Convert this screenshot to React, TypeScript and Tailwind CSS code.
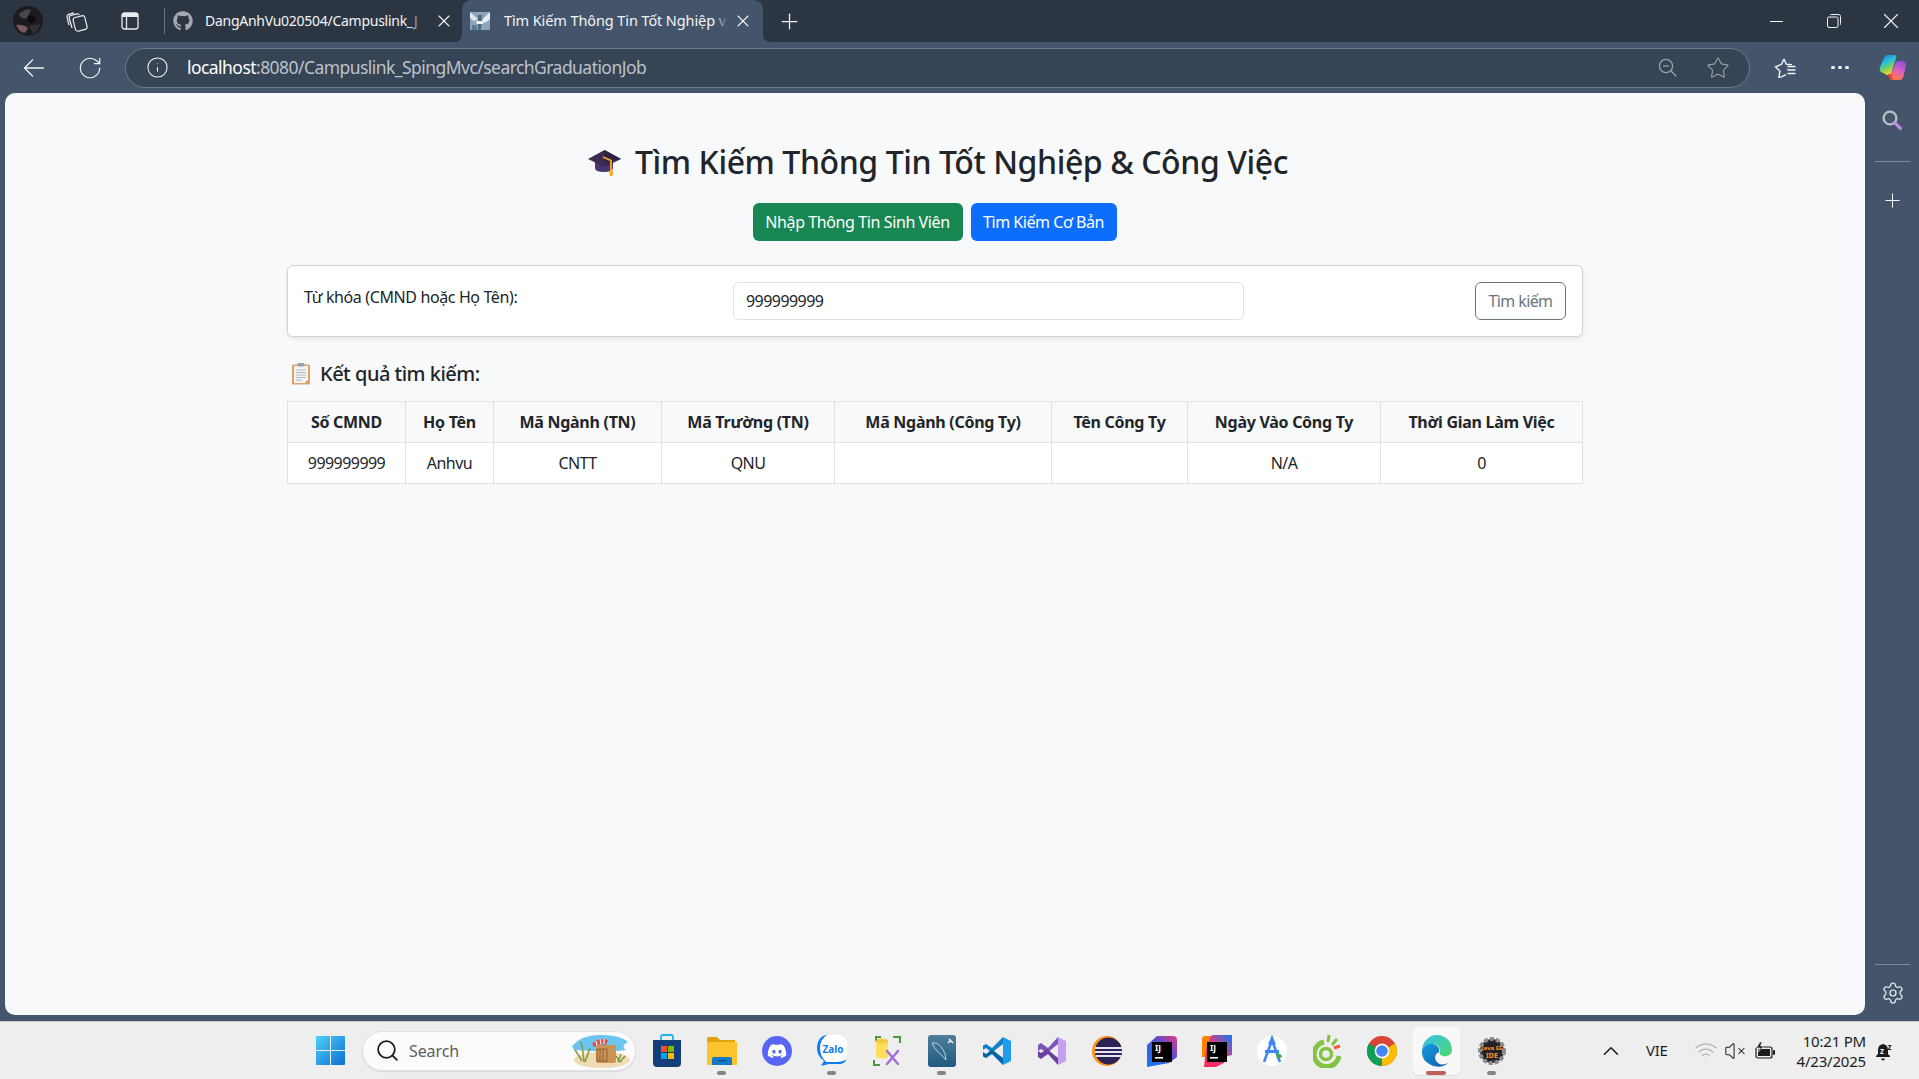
import React from "react";
import { RotateCw, Info, Star, Search, Plus, X, Settings, Wifi, VolumeX, ChevronUp } from "lucide-react";
import { FaGithub, FaDiscord } from "react-icons/fa";

const cols = [
  { h: "Số CMND", v: "999999999", w: "w-[118px]" },
  { h: "Họ Tên", v: "Anhvu", w: "w-[88px]" },
  { h: "Mã Ngành (TN)", v: "CNTT", w: "w-[168px]" },
  { h: "Mã Trường (TN)", v: "QNU", w: "w-[173px]" },
  { h: "Mã Ngành (Công Ty)", v: "", w: "w-[217px]" },
  { h: "Tên Công Ty", v: "", w: "w-[136px]" },
  { h: "Ngày Vào Công Ty", v: "N/A", w: "w-[193px]" },
  { h: "Thời Gian Làm Việc", v: "0", w: "w-[202px]" },
];

function Avatar() {
  return (
    <svg width="30" height="30" viewBox="0 0 30 30">
      <circle cx="15" cy="15" r="15" fill="#1d1a20" />
      <path d="M6 8 Q12 2 18 4 L14 12 Q8 14 6 8Z" fill="#4a4650" />
      <path d="M15 10 Q21 8 23 13 Q22 18 17 17 Q14 15 15 10Z" fill="#0c0c10" />
      <path d="M3 19 Q10 18 15 22 L12 27 Q6 26 3 19Z" fill="#7a5a5e" />
      <path d="M16 20 L27 18 Q26 25 20 28Z" fill="#33303a" />
    </svg>
  );
}

function BackArrow() {
  return (
    <svg width="22" height="20" viewBox="0 0 22 20" fill="none" stroke="#f2f4f7" strokeWidth="1.3" strokeLinecap="round" strokeLinejoin="round">
      <path d="M1.5 10 H20.5 M9.5 2 L1.5 10 L9.5 18" />
    </svg>
  );
}

function Workspaces() {
  return (
    <svg width="22" height="22" viewBox="0 0 22 22" fill="none" stroke="#e8ecf0" strokeWidth="1.2">
      <rect x="8" y="6.5" width="12" height="14" rx="2.5" transform="rotate(-14 14 13)" />
      <path d="M6 18 L3.2 8 Q2.8 6 5 5.4 L11 3.8 Q12.6 3.6 13.4 5" />
      <path d="M3 15 L1 7 Q0.8 5 2.6 4.4 L8 2.8" />
    </svg>
  );
}

function VerticalTabs() {
  return (
    <svg width="18" height="18" viewBox="0 0 18 18" fill="none">
      <rect x="1" y="1" width="16" height="16" rx="2.5" stroke="#e8ecf0" strokeWidth="1.3" />
      <path d="M1 3.5 A2.5 2.5 0 0 1 3.5 1 H14.5 A2.5 2.5 0 0 1 17 3.5 V5 H1Z" fill="#e8ecf0" />
      <path d="M5.5 5 V17" stroke="#e8ecf0" strokeWidth="1.3" />
    </svg>
  );
}

function PageFavicon() {
  return (
    <svg width="20" height="20" viewBox="0 0 20 20">
      <rect x="0" y="1" width="20" height="18" fill="#8ba6b8" />
      <path d="M0 1 L8 8 L4 10 L0 7Z" fill="#dfe7ec" />
      <path d="M20 1 L12 9 L15 12 L20 8Z" fill="#e8eef2" />
      <path d="M8 4 L12 4 L11 19 L8 19Z" fill="#4d6a7e" />
      <path d="M6 10 L14 10 L13 13 L7 13Z" fill="#f1f4f6" />
      <rect x="2" y="14" width="5" height="5" fill="#5c7c91" />
    </svg>
  );
}

function Favs() {
  return (
    <svg width="22" height="22" viewBox="0 0 22 22" fill="none" stroke="#f2f4f7" strokeWidth="1.4" strokeLinejoin="round">
      <path d="M10 2 L12.3 7.2 L18 7.6 M13.6 11.7 L14 12 M8 19.6 L4.8 20.4 L6 14.2 L1.4 9.8 L7.4 7.4 L10 2" />
      <path d="M8 19.6 L12 17.6" />
      <path d="M14 9.5 H21 M14 13 H21 M14 16.5 H21" strokeLinecap="round" />
    </svg>
  );
}

function Copilot() {
  return (
    <svg width="28" height="28" viewBox="0 0 28 28">
      <defs>
        <linearGradient id="cpA" x1="0" y1="0" x2="0.4" y2="1">
          <stop offset="0" stopColor="#1673e6" />
          <stop offset="0.45" stopColor="#2ac3d8" />
          <stop offset="0.75" stopColor="#8bd24f" />
          <stop offset="1" stopColor="#f4d63a" />
        </linearGradient>
        <linearGradient id="cpB" x1="0.6" y1="0" x2="0.3" y2="1">
          <stop offset="0" stopColor="#8f4fd8" />
          <stop offset="0.5" stopColor="#e060c0" />
          <stop offset="1" stopColor="#ff7a3a" />
        </linearGradient>
      </defs>
      <path d="M9 1 H16 Q18 1 17 4 L12 20 Q11 22 8 21 L2 18 Q0 17 1 13 L5 4 Q6 1 9 1Z" fill="url(#cpA)" />
      <path d="M19 7 H24 Q28 8 27 12 L24 24 Q23 26 21 26 H13 Q10 26 11 23 L16 10 Q17 7 19 7Z" fill="url(#cpB)" />
      <path d="M9 20 L12 20 L14 26 Q11 26 10 24Z" fill="#e8432e" />
    </svg>
  );
}

function SideSearch() {
  return (
    <svg width="22" height="22" viewBox="0 0 22 22" fill="none">
      <circle cx="9" cy="9" r="6.4" stroke="#b9bdc4" strokeWidth="2.4" />
      <path d="M14.4 14.4 L19.4 19.4" stroke="#b98ae0" strokeWidth="3.4" strokeLinecap="round" />
    </svg>
  );
}

function Restore() {
  return (
    <svg width="14" height="14" viewBox="0 0 14 14" fill="none" stroke="#f2f4f7" strokeWidth="1">
      <rect x="0.5" y="3" width="10.5" height="10.5" rx="1.5" />
      <path d="M3 1 Q3.4 0.5 4.4 0.5 H11.5 Q13.5 0.5 13.5 2.5 V9.6 Q13.5 10.6 13 11" />
    </svg>
  );
}

function WinLogo() {
  return (
    <svg width="29" height="29" viewBox="0 0 29 29">
      <defs>
        <linearGradient id="winG" x1="0" y1="0" x2="1" y2="1">
          <stop offset="0" stopColor="#4fd0fb" />
          <stop offset="1" stopColor="#0a6fd1" />
        </linearGradient>
      </defs>
      <path d="M1 0 H14 V14 H0 V1 Q0 0 1 0Z M15 0 H28 Q29 0 29 1 V14 H15Z M0 15 H14 V29 H1 Q0 29 0 28Z M15 15 H29 V28 Q29 29 28 29 H15Z" fill="url(#winG)" />
    </svg>
  );
}

function Beach() {
  return (
    <svg width="62" height="34" viewBox="0 0 62 34">
      <path d="M4 12 Q14 0 34 1 Q52 1 60 8 Q52 12 58 16 L40 18 L6 16Z" fill="#6cc5ee" />
      <ellipse cx="34" cy="26" rx="28" ry="8" fill="#f0dcb4" />
      <path d="M16 28 Q15 16 13 8 M14 27 Q10 20 7 16 M17 28 Q20 20 22 14" stroke="#8a9a3c" strokeWidth="1.6" fill="none" />
      <rect x="28" y="11" width="20" height="18" rx="2" fill="#c99458" />
      <path d="M29 15 H39 V27 H29Z M32 15 V27 M35 15 V27" stroke="#8a5c2c" strokeWidth="0.9" fill="none" />
      <path d="M24 10 Q30 3 40 6 L38 11 Q30 9 26 13Z" fill="#d8544a" />
      <path d="M28 7 L29 11 M32 5 L33 10 M36 5 L36 10" stroke="#fff" strokeWidth="1.1" />
      <path d="M50 28 L53 20 M52 28 L57 22 M52 28 L48 22" stroke="#6f9138" strokeWidth="1.3" />
    </svg>
  );
}

function Store() {
  return (
    <svg width="30" height="34" viewBox="0 0 30 34">
      <path d="M9 7 V3 Q9 1 11 1 H19 Q21 1 21 3 V7" fill="none" stroke="#1fb6f0" strokeWidth="1.8" />
      <path d="M1 6 H29 V29 Q29 33 25 33 H5 Q1 33 1 29Z" fill="#123f7a" />
      <rect x="9" y="12" width="6" height="6" fill="#f25022" />
      <rect x="16" y="12" width="6" height="6" fill="#7fba00" />
      <rect x="9" y="19" width="6" height="6" fill="#00a4ef" />
      <rect x="16" y="19" width="6" height="6" fill="#ffb900" />
    </svg>
  );
}

function Folder() {
  return (
    <svg width="30" height="28" viewBox="0 0 30 28">
      <path d="M0 2 Q0 0 2 0 H10 L13 3 H28 V10 H0Z" fill="#e0a30c" />
      <rect x="0" y="5" width="30" height="23" fill="#fbc42d" />
      <path d="M5 22 Q5 20 7 20 H23 Q25 20 25 22 V28 H5Z" fill="#1479c9" />
      <rect x="11" y="23" width="8" height="1.3" fill="#0b4c86" />
    </svg>
  );
}

function Zalo() {
  return (
    <svg width="30" height="32" viewBox="0 0 30 32">
      <path d="M9 0 H22 Q30 1 30 9 V21 Q30 29 22 29 H12 L4 31 L7 26 Q0 21 0 13 Q0 2 9 0Z" fill="#ffffff" />
      <path d="M9 0 Q0 2 0 13 Q0 21 7 26 L4 31 L12 29 H22 Q28 29 29.5 24 Q26 27 20 27 H9 Q3 21 3 13 Q3 4 10 0Z" fill="#0a7cf5" />
      <text x="16" y="18" textAnchor="middle" fontSize="10" fontWeight="700" fill="#0a7cf5" fontFamily="Noto Sans, sans-serif">Zalo</text>
    </svg>
  );
}

function DbTool() {
  return (
    <svg width="28" height="30" viewBox="0 0 28 30" fill="none">
      <path d="M3 5 V1 H8 M20 1 H27 V7 M1 24 V29 H7" stroke="#4c9a3f" strokeWidth="2" />
      <path d="M3 5 Q9 2 15 5 V21 Q9 24 3 21Z" fill="#fbdf5c" />
      <ellipse cx="9" cy="5" rx="6" ry="2.5" fill="#f5c93a" />
      <path d="M14 15 L25 28 M25 15 L14 28" stroke="#a06cd5" strokeWidth="2.4" strokeLinecap="round" />
    </svg>
  );
}

function MysqlIcon() {
  return (
    <svg width="28" height="32" viewBox="0 0 28 32">
      <defs>
        <linearGradient id="myG" x1="0" y1="0" x2="0" y2="1">
          <stop offset="0" stopColor="#4e7f9c" />
          <stop offset="1" stopColor="#1f5a7f" />
        </linearGradient>
      </defs>
      <rect x="0" y="0" width="28" height="32" rx="3" fill="url(#myG)" />
      <path d="M4 8 Q10 7 14 13 Q18 18 18 25 Q14 20 10 17 Q6 13 4 8Z" fill="none" stroke="#c9d8e0" strokeWidth="0.9" />
      <path d="M21 4 L25 8 M23 5 L20 8" stroke="#eef3f6" strokeWidth="1.6" />
    </svg>
  );
}

function VsCode() {
  return (
    <svg width="30" height="30" viewBox="0 0 30 30">
      <path d="M21 1 L29 5 V25 L21 29Z" fill="#1f9cf0" />
      <path d="M21 1 V8 L10 16.5 L4 12 L1 14 V9.5 L4 8 L10 12Z" fill="#0f80c9" />
      <path d="M21 29 V22 L10 13.5 L4 18 L1 16 V20.5 L4 22 L10 18Z" fill="#0065a9" />
    </svg>
  );
}

function VsIcon() {
  return (
    <svg width="30" height="30" viewBox="0 0 30 30">
      <path d="M21 1 L29 5 V25 L21 29Z" fill="#c79ff0" />
      <path d="M21 1 V8 L10 17 L4 13 L1 15 V9 L4 7 L11 12Z" fill="#7d55b8" />
      <path d="M21 29 V22 L10 13 L4 17 L1 15 V21 L4 23 L11 18Z" fill="#68409f" />
    </svg>
  );
}

function Eclipse() {
  return (
    <svg width="30" height="30" viewBox="0 0 30 30">
      <circle cx="15" cy="15" r="15" fill="#f7941e" />
      <circle cx="16.5" cy="15" r="13.5" fill="#2c2255" />
      <path d="M3 11 H30 V13 H3Z M3 15 H30 V17 H3Z M4 19 H29 V21 H4Z" fill="#e8e4f2" />
    </svg>
  );
}

function Idea({ variant }: { variant: number }) {
  return (
    <svg width="30" height="32" viewBox="0 0 30 32">
      <defs>
        <linearGradient id={"ij" + variant} x1="0" y1="1" x2="1" y2="0">
          {variant === 1 ? <stop offset="0" stopColor="#087cfa" /> : <stop offset="0" stopColor="#fe2857" />}
          {variant === 1 ? <stop offset="0.6" stopColor="#5a4cd0" /> : <stop offset="0.5" stopColor="#e8367c" />}
          {variant === 1 ? <stop offset="1" stopColor="#e33a7d" /> : <stop offset="1" stopColor="#087cfa" />}
        </linearGradient>
      </defs>
      {variant === 2 && <path d="M0 4 Q0 1 3 1 H12 V22 H0Z" fill="#ff8100" />}
      <path d={variant === 1 ? "M0 10 L10 1 H26 Q30 1 30 5 V22 L22 28 L0 32Z" : "M8 4 Q8 0 12 0 H30 V20 L22 22 V28 L14 32 H2 L4 14Z"} fill={"url(#ij" + variant + ")"} />
      <rect x="5" y="7" width="20" height="20" fill="#000" />
      <text x="8" y="16" fontSize="8.5" fontWeight="700" fill="#fff" fontFamily="Noto Sans, sans-serif">IJ</text>
      <rect x="8" y="22" width="8" height="1.6" fill="#fff" />
    </svg>
  );
}

function AndroidStudio() {
  return (
    <svg width="30" height="32" viewBox="0 0 30 32">
      <circle cx="15" cy="16" r="15" fill="#fff" />
      <path d="M15 3 L17 8 L13 8Z M14 8 L7 27 M16 8 L23 27" stroke="#4285f4" strokeWidth="2.6" fill="#4285f4" />
      <rect x="8" y="15" width="14" height="3" fill="#4285f4" />
      <path d="M19 18 Q24 18 25 22 L20 24Z" fill="#34a853" />
    </svg>
  );
}

function CocCoc() {
  return (
    <svg width="28" height="34" viewBox="0 0 28 34" fill="none">
      <path d="M11 8 A12.5 12.5 0 1 0 26 22" stroke="#82c341" strokeWidth="5" />
      <circle cx="13" cy="20" r="5.5" stroke="#82c341" strokeWidth="3.5" />
      <path d="M15 8 L16 1 M19 11 L24 5" stroke="#82c341" strokeWidth="3" />
      <path d="M21 14 L27 12" stroke="#f15a29" strokeWidth="3" />
    </svg>
  );
}

function Chrome() {
  return (
    <svg width="30" height="30" viewBox="0 0 30 30">
      <circle cx="15" cy="15" r="15" fill="#db4437" />
      <path d="M15 15 L28 7.5 A15 15 0 0 1 15 30Z" fill="#fbbc05" />
      <path d="M15 15 L15 30 A15 15 0 0 1 2 7.5Z" fill="#0f9d58" />
      <circle cx="15" cy="15" r="7.4" fill="#fff" />
      <circle cx="15" cy="15" r="5.8" fill="#4285f4" />
    </svg>
  );
}

function Edge() {
  return (
    <svg width="30" height="32" viewBox="0 0 30 32">
      <defs>
        <linearGradient id="edA" x1="0" y1="0" x2="1" y2="1">
          <stop offset="0" stopColor="#35c1f1" />
          <stop offset="1" stopColor="#50d96a" />
        </linearGradient>
        <linearGradient id="edB" x1="0" y1="0" x2="1" y2="1">
          <stop offset="0" stopColor="#1b9de2" />
          <stop offset="1" stopColor="#0c59a4" />
        </linearGradient>
      </defs>
      <path d="M15 0 C24 0 30 7 30 15 C30 20 25 22 21 21 C17 20 17 18 18 16 C18 11 13 8 8 10 C4 12 1 16 0 19 C-1 8 6 0 15 0Z" fill="url(#edA)" />
      <path d="M0 17 C1 11 6 8 11 9 C16 10 18 14 17 17 C12 19 12 25 16 28 C20 31 25 29 27 27 C23 32 15 33 9 30 C3 27 0 23 0 17Z" fill="url(#edB)" />
    </svg>
  );
}

function JavaEE() {
  return (
    <svg width="30" height="32" viewBox="0 0 30 32">
      <circle cx="15" cy="16" r="12" fill="#22202a" stroke="#8b8b8b" strokeWidth="4" strokeDasharray="4 2" />
      <text x="15" y="15" textAnchor="middle" fontSize="6" fontWeight="700" fill="#ff9a1f" fontFamily="Noto Sans, sans-serif">Java EE</text>
      <text x="15" y="23" textAnchor="middle" fontSize="7" fontWeight="700" fill="#ff9a1f" fontFamily="Noto Sans, sans-serif">IDE</text>
    </svg>
  );
}

function BatteryIcon() {
  return (
    <svg width="21" height="18" viewBox="0 0 21 18" fill="none">
      <rect x="1" y="5" width="16" height="11" rx="2" stroke="#1c1c1c" strokeWidth="1.2" />
      <rect x="3" y="7" width="12" height="7" fill="#1c1c1c" />
      <rect x="18" y="8" width="2" height="5" rx="1" fill="#1c1c1c" />
      <path d="M5 0 L1.5 6 H5 L3 10 L8.5 4 H5.5 L7 0Z" fill="#1c1c1c" stroke="#eeeeee" strokeWidth="0.6" />
    </svg>
  );
}

function BellZ() {
  return (
    <svg width="20" height="22" viewBox="0 0 20 22">
      <path d="M7 4 Q2 5 2 10 V14 L0 16 V17 H14 V16 L12 14 V10 Q12 5 7 4Z" fill="#1c1c1c" />
      <path d="M5 18.5 H9 Q8.5 20.5 7 20.5 Q5.5 20.5 5 18.5Z" fill="#1c1c1c" />
      <text x="4" y="14" fontSize="8" fontWeight="700" fill="#eee" fontFamily="Noto Sans, sans-serif">z</text>
      <text x="11.5" y="10" fontSize="8" fontWeight="700" fill="#1c1c1c" fontFamily="Noto Sans, sans-serif">z</text>
    </svg>
  );
}

function TabCorner({ flip }: { flip?: boolean }) {
  return (
    <svg width="8" height="8" viewBox="0 0 8 8" className={flip ? "absolute bottom-0 -right-[8px] -scale-x-100" : "absolute bottom-0 -left-[8px]"}>
      <path d="M8 0 V8 H0 Q8 8 8 0Z" fill="#44546a" />
    </svg>
  );
}

function Dock({ children, dot, active }: { children: React.ReactNode; dot?: boolean; active?: boolean }) {
  return (
    <div className="relative flex h-[48px] w-[55px] shrink-0 items-center justify-center">
      {active && <div className="absolute left-[4px] top-0 h-[48px] w-[47px] rounded-[5px] bg-[#f8f8f8] shadow-[0_1px_1px_rgba(0,0,0,0.08)]" />}
      <div className="relative flex items-center justify-center">{children}</div>
      {dot && <div className="absolute bottom-[0px] left-[23px] h-[4px] w-[9px] rounded-full bg-[#858585]" />}
      {active && <div className="absolute bottom-[0px] left-[17px] h-[4px] w-[20px] rounded-full bg-[#c0605a]" />}
    </div>
  );
}

function ZoomOutIcon() {
  return (
    <svg width="20" height="20" viewBox="0 0 20 20" fill="none" stroke="#98a1ac" strokeWidth="1.3">
      <circle cx="8" cy="8" r="6.6" />
      <path d="M13 13 L18.5 18.5" />
      <path d="M5 8 H11" />
    </svg>
  );
}

function CapIcon() {
  return (
    <svg width="33" height="28" viewBox="0 0 33 28">
      <path d="M7 12 V20 Q7 24 16 24 Q25 24 25 20 V12Z" fill="#4a3470" />
      <path d="M0 11 L16.5 2 L33 11 L16.5 19Z" fill="#3b2c50" />
      <path d="M16.5 2 L33 11 L16.5 14Z" fill="#2f2240" />
      <path d="M15 9 L23 12.5 V24" stroke="#f9a825" strokeWidth="1.8" fill="none" />
      <rect x="21.5" y="22" width="3.4" height="6" rx="1" fill="#f9a825" />
    </svg>
  );
}

function ClipIcon() {
  return (
    <svg width="18" height="22" viewBox="0 0 18 22">
      <rect x="0" y="1.5" width="18" height="20" rx="1" fill="#e0a366" />
      <rect x="2" y="3" width="14" height="17" fill="#f4f4f4" />
      <rect x="5.5" y="0" width="7" height="3.5" rx="1" fill="#9aa0a6" />
      <path d="M4 7 H14 M4 9.5 H14 M4 12 H14 M4 14.5 H14 M4 17 H10" stroke="#aab2bb" strokeWidth="0.9" />
      <path d="M13 20 L16 17 V20Z" fill="#c98a4a" />
    </svg>
  );
}

export default function App() {
  return (
    <div className="flex h-[1079px] w-[1919px] flex-col overflow-hidden bg-[#44546a] font-['Noto_Sans',sans-serif] text-[#212529]">
      {/* tab strip */}
      <div className="flex h-[42px] shrink-0 items-center bg-[#2c3643] text-[#f2f4f7]">
        <div className="flex w-[56px] justify-end pr-[13px]"><Avatar /></div>
        <div className="flex w-[42px] justify-center"><Workspaces /></div>
        <div className="flex w-[64px] justify-center"><VerticalTabs /></div>
        <div className="ml-[2px] h-[26px] w-px bg-[#6b7581]" />
        <div className="flex h-full w-[297px] items-center pl-[8px]">
          <FaGithub className="h-[20px] w-[20px] shrink-0 text-[#a3a9b0]" />
          <div className="relative -mt-[1px] ml-[12px] w-[218px] whitespace-nowrap text-[14px] tracking-[-0.27px] text-[#f2f4f7]">
            DangAnhVu020504/Campuslink_J
            <div className="absolute inset-y-0 right-0 w-[14px] bg-gradient-to-r from-transparent to-[#2c3643]" />
          </div>
          <X className="ml-[11px] h-[20px] w-[20px] shrink-0" strokeWidth={1.3} />
        </div>
        <div className="relative flex h-[42px] w-[301px] items-center self-end rounded-t-[9px] bg-[#44546a] pl-[8px]">
          <TabCorner />
          <TabCorner flip />
          <PageFavicon />
          <div className="relative -mt-[1px] ml-[14px] w-[224px] whitespace-nowrap text-[14.5px] tracking-[-0.1px] text-[#f2f4f7]">
            Tìm Kiếm Thông Tin Tốt Nghiệp v
            <div className="absolute inset-y-0 right-0 w-[14px] bg-gradient-to-r from-transparent to-[#44546a]" />
          </div>
          <X className="ml-[5px] h-[20px] w-[20px] shrink-0" strokeWidth={1.3} />
        </div>
        <div className="flex w-[52px] justify-center"><Plus className="h-[25px] w-[25px]" strokeWidth={1.2} /></div>
        <div className="flex-1" />
        <div className="flex w-[58px] justify-center"><div className="h-px w-[13px] bg-[#f2f4f7]" /></div>
        <div className="flex w-[58px] justify-center"><Restore /></div>
        <div className="flex w-[56px] justify-center pr-[1px]"><X className="h-[26px] w-[26px]" strokeWidth={1} /></div>
      </div>

      {/* toolbar */}
      <div className="flex h-[51px] shrink-0 items-center text-[#f2f4f7]">
        <div className="flex w-[68px] shrink-0 justify-center"><BackArrow /></div>
        <div className="flex w-[44px] shrink-0 justify-center"><RotateCw className="h-[26px] w-[26px]" strokeWidth={1.1} /></div>
        <div className="ml-[13px] flex h-[40px] w-[1625px] shrink-0 items-center rounded-full border border-[#6f7b8b] bg-[#374455] pl-[20px]">
          <Info className="h-[23px] w-[23px]" strokeWidth={1.1} />
          <div className="ml-[18px] whitespace-nowrap text-[17.5px] tracking-[-0.55px] text-[#bcc3cc]">
            <span className="text-white">localhost</span>:8080/Campuslink_SpingMvc/searchGraduationJob
          </div>
          <div className="flex-1" />
          <ZoomOutIcon />
          <Star className="ml-[28px] mr-[19px] h-[24px] w-[24px] text-[#98a1ac]" strokeWidth={1.1} />
        </div>
        <div className="flex w-[70px] shrink-0 justify-center"><Favs /></div>
        <div className="flex w-[40px] shrink-0 justify-center gap-[3.5px]">
          <span className="h-[3.5px] w-[3.5px] rounded-full bg-[#f2f4f7]" />
          <span className="h-[3.5px] w-[3.5px] rounded-full bg-[#f2f4f7]" />
          <span className="h-[3.5px] w-[3.5px] rounded-full bg-[#f2f4f7]" />
        </div>
        <div className="flex w-[59px] shrink-0 justify-center pl-[7px]"><Copilot /></div>
      </div>

      {/* main frame */}
      <div className="flex h-[928px] shrink-0">
        <div className="ml-[5px] h-[922px] w-[1860px] shrink-0 rounded-[10px] bg-[#f8f9fa]">
          <div className="mx-auto w-[1296px] pt-[50px]">
            <h2 className="flex h-[38px] items-center justify-center pl-[6px] text-[32px] font-medium leading-[38px] tracking-[-0.42px] text-[#212529]">
              <span className="mr-[14px] flex"><CapIcon /></span>
              <span>Tìm Kiếm Thông Tin Tốt Nghiệp &amp; Công Việc</span>
            </h2>
            <div className="mt-[22px] flex justify-center gap-[8px] pr-[1px]">
              <button className="h-[38px] w-[210px] whitespace-nowrap rounded-[6px] bg-[#198754] text-[16px] tracking-[-0.4px] text-white">Nhập Thông Tin Sinh Viên</button>
              <button className="h-[38px] w-[146px] whitespace-nowrap rounded-[6px] bg-[#0d6efd] text-[16px] tracking-[-0.45px] text-white">Tìm Kiếm Cơ Bản</button>
            </div>
            <div className="mt-[24px] flex h-[72px] items-start rounded-[6px] border border-[#cfd2d5] bg-white pl-[16px] pr-[16px] pt-[16px] shadow-[0_2px_4px_rgba(0,0,0,0.08)]">
              <div className="mt-[3px] w-[429px] text-[16px] leading-[24px] tracking-[-0.38px] text-[#212529]">Từ khóa (CMND hoặc Họ Tên):</div>
              <div className="flex h-[38px] w-[511px] items-center rounded-[6px] border border-[#dee2e6] bg-white pl-[12px] text-[16px] tracking-[-0.55px] text-[#212529]">999999999</div>
              <div className="flex-1" />
              <button className="h-[38px] w-[91px] whitespace-nowrap rounded-[6px] border border-[#6c757d] text-[16px] tracking-[-0.6px] text-[#6c757d]">Tìm kiếm</button>
            </div>
            <h4 className="mt-[23px] flex h-[28px] items-center pl-[5px] text-[20px] font-medium tracking-[-0.5px] text-[#212529]">
              <span className="mr-[10px] flex"><ClipIcon /></span>
              Kết quả tìm kiếm:
            </h4>
            <table className="mt-[13px] w-[1295px] table-fixed border-collapse text-center text-[16px] tracking-[-0.55px]">
              <thead>
                <tr>
                  {cols.map((c) => (
                    <th key={c.h} className={`${c.w} h-[41px] border border-[#dee2e6] bg-[#f8f9fa] p-0 font-bold tracking-[-0.28px] text-[#212529]`}>{c.h}</th>
                  ))}
                </tr>
              </thead>
              <tbody>
                <tr>
                  {cols.map((c) => (
                    <td key={c.h} className="h-[41px] border border-[#dee2e6] bg-white p-0 text-[#212529]">{c.v}</td>
                  ))}
                </tr>
              </tbody>
            </table>
          </div>
        </div>
        <div className="flex h-[922px] flex-1 flex-col items-center pt-[16px] text-[#f2f4f7]">
          <SideSearch />
          <div className="mt-[30px] h-px w-[35px] bg-[#7d8897]" />
          <Plus className="mt-[27px] h-[23px] w-[23px]" strokeWidth={1.1} />
          <div className="flex-1" />
          <div className="h-px w-[35px] bg-[#7d8897]" />
          <Settings className="mb-[10px] ml-[1px] mt-[16px] h-[24px] w-[24px]" strokeWidth={1.2} />
        </div>
      </div>

      {/* taskbar */}
      <div className="flex h-[58px] shrink-0 items-center border-t border-[#c9c9c9] bg-[#eeeeee] pl-[302px] text-[#1c1c1c]">
        <div className="flex w-[56px] justify-center"><WinLogo /></div>
        <div className="ml-[4px] flex h-[40px] w-[274px] items-center rounded-full border border-[#e2e2e2] bg-[#fbfbfb] pl-[12px] shadow-[0_1px_1px_rgba(0,0,0,0.08)]">
          <Search className="h-[25px] w-[25px]" strokeWidth={1.7} />
          <span className="ml-[9px] text-[16px] tracking-[-0.1px] text-[#5d5d5d]">Search</span>
          <div className="flex-1" />
          <div className="mr-[5px] flex"><Beach /></div>
        </div>
        <div className="ml-[3px] flex">
          <Dock><Store /></Dock>
          <Dock dot><Folder /></Dock>
          <Dock>
            <div className="flex h-[30px] w-[30px] items-center justify-center rounded-full bg-[#5865f2]"><FaDiscord className="h-[20px] w-[20px] text-white" /></div>
          </Dock>
          <Dock dot><Zalo /></Dock>
          <Dock><DbTool /></Dock>
          <Dock dot><MysqlIcon /></Dock>
          <Dock><VsCode /></Dock>
          <Dock><VsIcon /></Dock>
          <Dock><Eclipse /></Dock>
          <Dock><Idea variant={1} /></Dock>
          <Dock><Idea variant={2} /></Dock>
          <Dock><AndroidStudio /></Dock>
          <Dock><CocCoc /></Dock>
          <Dock><Chrome /></Dock>
          <Dock active><Edge /></Dock>
          <Dock dot><JavaEE /></Dock>
        </div>
        <div className="ml-[83px] flex w-[18px] justify-center"><ChevronUp className="h-[26px] w-[26px] shrink-0" strokeWidth={1.4} /></div>
        <div className="ml-[26px] w-[24px] text-[15px] tracking-[-0.3px]">VIE</div>
        <div className="ml-[26px] flex w-[20px] justify-center"><Wifi className="h-[24px] w-[24px] shrink-0 text-[#a8a8a8]" strokeWidth={1.2} /></div>
        <div className="ml-[9px] flex w-[20px] justify-center"><VolumeX className="h-[22px] w-[22px] shrink-0" strokeWidth={1.1} /></div>
        <div className="ml-[10px] flex w-[22px]"><BatteryIcon /></div>
        <div className="ml-[5px] flex w-[84px] flex-col items-end text-[15px] leading-[20px] tracking-[-0.2px]">
          <span>10:21 PM</span>
          <span>4/23/2025</span>
        </div>
        <div className="ml-[10px] flex"><BellZ /></div>
      </div>
    </div>
  );
}
